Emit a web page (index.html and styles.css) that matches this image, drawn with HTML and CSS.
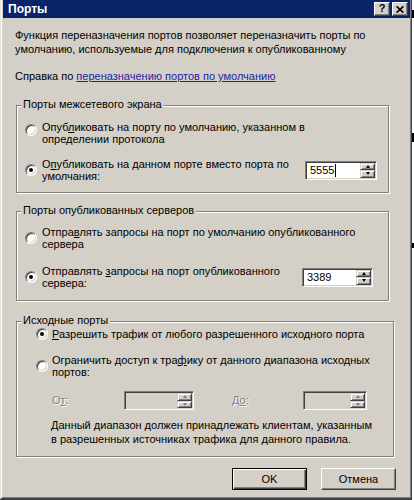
FILE: index.html
```html
<!DOCTYPE html>
<html lang="ru">
<head>
<meta charset="utf-8">
<title>Порты</title>
<link rel="stylesheet" href="styles.css">
</head>
<body>
<div class="screen">
  <div class="window">
    <div class="titlebar">
      <span class="title">Порты</span>
      <div class="tbtns">
        <span class="tbtn help">?</span>
        <span class="tbtn close"><svg width="8" height="7" viewBox="0 0 8 7"><path d="M0.6 0.4 L7.4 6.6 M7.4 0.4 L0.6 6.6" stroke="#000" stroke-width="1.7" fill="none"/></svg></span>
      </div>
    </div>
    <div class="content">
      <p class="desc">Функция переназначения портов позволяет переназначить порты по<br>умолчанию, используемые для подключения к опубликованному</p>
      <p class="helpline">Справка по <a class="link" href="#">переназначению портов по умолчанию</a></p>

      <div class="group g1">
        <span class="legend">Порты межсетевого экрана</span>
        <div class="row">
          <span class="radio up"></span>
          <span class="label">Опуб<u>л</u>иковать на порту по умолчанию, указанном в<br>определении протокола</span>
        </div>
        <div class="row r-gap13">
          <span class="radio checked"></span>
          <span class="label">О<u>п</u>убликовать на данном порте вместо порта по<br>умолчания:</span>
          <div class="spin w72"><span class="val">5555<span class="caret"></span></span><span class="arrows"><span class="arr"><span class="tri-up"></span></span><span class="arr"><span class="tri-down"></span></span></span></div>
        </div>
      </div>

      <div class="group g2">
        <span class="legend">Порты опубликованных серверов</span>
        <div class="row">
          <span class="radio"></span>
          <span class="label">Отпра<u>в</u>лять запросы на порт по умолчанию опубликованного<br>сервера</span>
        </div>
        <div class="row r-gap15">
          <span class="radio checked"></span>
          <span class="label">Отправлять <u>з</u>апросы на порт опубликованного<br>сервера:</span>
          <div class="spin w71"><span class="val">3389</span><span class="arrows"><span class="arr"><span class="tri-up"></span></span><span class="arr"><span class="tri-down"></span></span></span></div>
        </div>
      </div>

      <div class="group g3">
        <span class="legend">Исходные порты</span>
        <div class="row single">
          <span class="radio checked"></span>
          <span class="label"><u>Р</u>азрешить трафик от любого разрешенного исходного порта</span>
        </div>
        <div class="row r-gap14">
          <span class="radio"></span>
          <span class="label">Ограничить доступ к тра<u>ф</u>ику от данного диапазона исходных<br>портов:</span>
        </div>
        <div class="range">
          <span class="dlabel from">О<u>т</u>:</span>
          <div class="spin disabled w70"><span class="val"></span><span class="arrows"><span class="arr"><span class="tri-up"></span></span><span class="arr"><span class="tri-down"></span></span></span></div>
          <span class="dlabel to">Д<u>о</u>:</span>
          <div class="spin disabled w64"><span class="val"></span><span class="arrows"><span class="arr"><span class="tri-up"></span></span><span class="arr"><span class="tri-down"></span></span></span></div>
        </div>
        <p class="note">Данный диапазон должен принадлежать клиентам, указанным<br>в разрешенных источниках трафика для данного правила.</p>
      </div>

      <div class="buttons">
        <span class="btn default">OK</span>
        <span class="btn">Отмена</span>
      </div>
    </div>
  </div>
  <div class="behind">
    <span class="tick t1"></span>
    <span class="tick t2"></span>
    <span class="tick t3"></span>
  </div>
</div>
</body>
</html>
```
FILE: styles.css
```css
html, body {
  margin: 0;
  padding: 0;
  background: #fff;
}
body {
  font-family: "Liberation Sans", Arial, sans-serif;
  font-size: 11px;
  color: #000;
}
p { margin: 0; }

.screen {
  display: flex;
  width: 414px;
  height: 500px;
  overflow: hidden;
}

.window {
  flex: none;
  width: 412px;
  height: 500px;
  box-sizing: border-box;
  background: #d4d0c8;
  border-left: 1px solid #e4e2dc;
  border-right: 1px solid #404040;
  border-bottom: 2px solid #404040;
  padding: 0 1px 1px 2px;
  box-shadow: inset 1px 0 0 #fff, inset -1px -1px 0 #808080;
  display: flex;
  flex-direction: column;
}

/* title bar */
.titlebar {
  flex: none;
  height: 18px;
  background: #0a246a;
  display: flex;
  align-items: center;
  padding-left: 5px;
}
.title {
  color: #fff;
  font-weight: bold;
  font-size: 12px;
  line-height: 14px;
}
.tbtns {
  margin-left: auto;
  margin-right: 2px;
  display: flex;
  gap: 2px;
}
.tbtn {
  width: 16px;
  height: 14px;
  box-sizing: border-box;
  background: #d4d0c8;
  border: 1px solid;
  border-color: #fff #404040 #404040 #fff;
  box-shadow: inset -1px -1px 0 #808080;
  display: flex;
  align-items: center;
  justify-content: center;
}
.tbtn.help {
  font-weight: bold;
  font-size: 11px;
  line-height: 11px;
  padding-bottom: 1px;
}
.tbtn svg { display: block; }

/* content */
.content {
  flex: 1;
  display: flex;
  flex-direction: column;
  padding: 10px 0 0 12px;
}
.desc { line-height: 14px; }
.helpline { margin-top: 13px; line-height: 14px; }
.link {
  color: #1f1fa3;
  text-decoration: underline;
}

/* group boxes */
.group {
  position: relative;
  box-sizing: border-box;
  margin-left: 1px;
  border: 1px solid #808080;
  box-shadow: inset 1px 1px 0 #fff, 1px 1px 0 #fff;
}
.legend {
  position: absolute;
  top: -8px;
  left: 4px;
  padding: 0 2px;
  background: #d4d0c8;
  line-height: 13px;
  white-space: nowrap;
}
.g1 {
  width: 373px;
  margin-top: 22px;
  padding: 15px 11px 10px 8px;
}
.g2 {
  width: 373px;
  margin-top: 18px;
  padding: 14px 15px 11px 8px;
}
.g3 {
  width: 378px;
  margin-top: 20px;
  padding: 6px 10px 10px 19px;
}

.row {
  display: flex;
  align-items: center;
}
.r-gap13 { margin-top: 13px; }
.r-gap14 { margin-top: 14px; }
.r-gap15 { margin-top: 15px; }
.label {
  line-height: 12px;
  white-space: nowrap;
}
.g3 .row .radio { margin-right: 4px; }

/* radio */
.radio {
  flex: none;
  position: relative;
  width: 12px;
  height: 12px;
  box-sizing: border-box;
  margin-right: 5px;
  border-radius: 50%;
  background: #fff;
  border: 1px solid;
  border-color: #808080 #fff #fff #808080;
  box-shadow: inset 1px 1px 0 #404040, inset -1px -1px 0 #d4d0c8;
}
.radio.up {
  align-self: flex-start;
  margin-top: 3px;
}
.radio.checked::after {
  content: "";
  position: absolute;
  left: 3px;
  top: 3px;
  width: 4px;
  height: 4px;
  border-radius: 50%;
  background: #000;
}

/* spin edit */
.spin {
  flex: none;
  margin-left: auto;
  height: 19px;
  box-sizing: border-box;
  display: flex;
  align-items: stretch;
  padding: 1px;
  background: #fff;
  border: 1px solid;
  border-color: #808080 #fff #fff #808080;
  box-shadow: inset 1px 1px 0 #404040, inset -1px -1px 0 #d4d0c8;
}
.w72 { width: 72px; }
.w71 { width: 71px; }
.w70 { width: 70px; }
.w64 { width: 64px; }
.spin .val {
  flex: 1;
  padding-left: 3px;
  line-height: 15px;
  display: flex;
  align-items: center;
}
.caret {
  display: inline-block;
  width: 1px;
  height: 13px;
  background: #000;
  margin-left: 1px;
}
.arrows {
  flex: none;
  width: 15px;
  display: flex;
  flex-direction: column;
}
.arr {
  flex: 1;
  box-sizing: border-box;
  background: #d4d0c8;
  border: 1px solid;
  border-color: #d4d0c8 #404040 #404040 #d4d0c8;
  box-shadow: inset 1px 1px 0 #fff, inset -1px -1px 0 #808080;
  display: flex;
  align-items: center;
  justify-content: center;
}
.tri-up, .tri-down {
  width: 0;
  height: 0;
  border-left: 2.5px solid transparent;
  border-right: 2.5px solid transparent;
}
.tri-up { border-bottom: 3px solid #000; }
.tri-down { border-top: 3px solid #000; }
.spin.disabled { background: #d4d0c8; }
.spin.disabled .tri-up { border-bottom-color: #808080; }
.spin.disabled .tri-down { border-top-color: #808080; }

/* range row */
.range {
  display: flex;
  align-items: center;
  margin-top: 13px;
  padding-left: 16px;
}
.dlabel {
  flex: none;
  color: #808080;
  text-shadow: 1px 1px 0 #fff;
  line-height: 13px;
}
.dlabel.from { width: 72px; }
.dlabel.to { width: 71px; margin-left: 38px; }
.range .spin { margin-left: 0; }

.note {
  margin-top: 8px;
  padding-left: 15px;
  line-height: 14px;
  white-space: nowrap;
}

/* buttons */
.buttons {
  display: flex;
  justify-content: flex-end;
  gap: 14px;
  margin-top: 11px;
  margin-right: 14px;
}
.btn {
  width: 75px;
  height: 22px;
  box-sizing: border-box;
  display: flex;
  align-items: center;
  justify-content: center;
  background: #d4d0c8;
  border: 1px solid;
  border-color: #fff #404040 #404040 #fff;
  box-shadow: inset -1px -1px 0 #808080;
}
.btn.default {
  border: 1px solid #000;
  box-shadow: inset 1px 1px 0 #fff, inset -1px -1px 0 #404040, inset -2px -2px 0 #808080;
}

/* background behind the window */
.behind {
  flex: 1;
  display: flex;
  flex-direction: column;
}
.tick {
  width: 2px;
  background: #000;
}
.t1 { margin-top: 10px; height: 8px; }
.t2 { margin-top: 115px; height: 9px; }
.t3 { margin-top: 101px; height: 5px; }
```
